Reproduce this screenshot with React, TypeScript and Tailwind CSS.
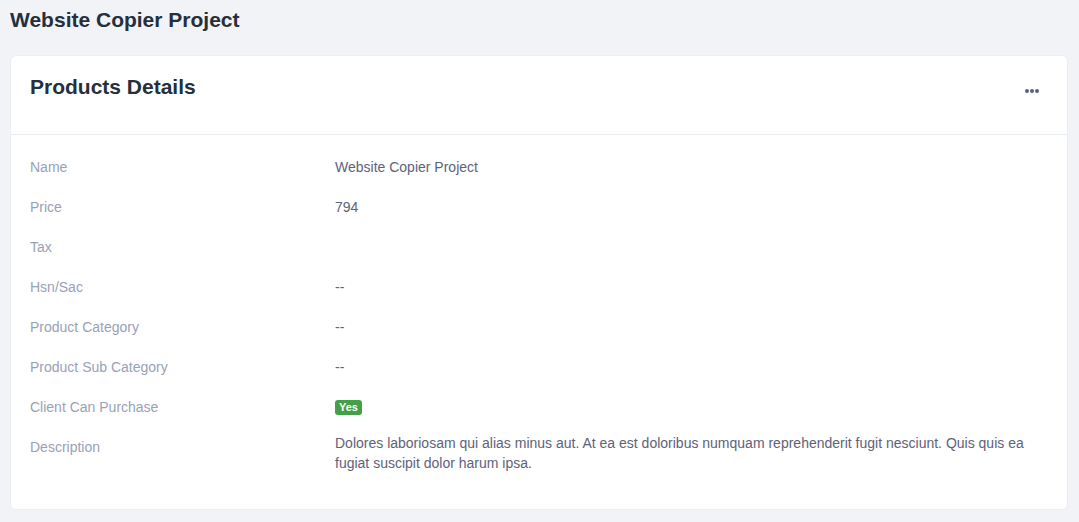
const rows: { label: string; value: string }[] = [
  { label: "Name", value: "Website Copier Project" },
  { label: "Price", value: "794" },
  { label: "Tax", value: "" },
  { label: "Hsn/Sac", value: "--" },
  { label: "Product Category", value: "--" },
  { label: "Product Sub Category", value: "--" },
];

const App = () => {
  return (
    <div className="min-h-[522px] bg-[#f2f3f7] px-[10px] pt-[6px] pb-[12px] font-['Liberation_Sans',Arial,sans-serif]">
      <h1 className="mb-[21px] text-[21px] leading-[28px] font-bold text-[#252f3d]">
        Website Copier Project
      </h1>

      <div className="w-[1058px] rounded-[6px] border border-[#eceef3] bg-white">
        <div className="flex h-[79px] items-start justify-between border-b border-[#e9edf2] px-[19px] pt-[17px]">
          <h2 className="text-[21px] leading-[28px] font-bold text-[#252f3d]">Products Details</h2>
          <button className="mt-[16px] mr-[9px] flex gap-[1px]">
            <span className="h-[4px] w-[4px] rounded-full bg-[#5e6278]" />
            <span className="h-[4px] w-[4px] rounded-full bg-[#5e6278]" />
            <span className="h-[4px] w-[4px] rounded-full bg-[#5e6278]" />
          </button>
        </div>

        <div className="px-[19px] pt-[12px] pb-[26px] text-[14px] leading-[20px]">
          {rows.map((r) => (
            <div key={r.label} className="flex py-[10px]">
              <div className="w-[305px] shrink-0 text-[#99a1b7]">{r.label}</div>
              <div className="text-[#5e6278]">{r.value}</div>
            </div>
          ))}
          <div className="flex py-[10px]">
            <div className="w-[305px] shrink-0 text-[#99a1b7]">Client Can Purchase</div>
            <div className="flex items-center">
              <span className="rounded-[3px] bg-[#43a047] px-[4px] text-[11px] leading-[15px] font-bold text-white">
                Yes
              </span>
            </div>
          </div>
          <div className="flex py-[10px]">
            <div className="w-[305px] shrink-0 text-[#99a1b7]">Description</div>
            <div className="-mt-[4px] pr-[20px] text-[#5e6278]">
              Dolores laboriosam qui alias minus aut. At ea est doloribus numquam reprehenderit fugit nesciunt. Quis quis ea fugiat suscipit dolor harum ipsa.
            </div>
          </div>
        </div>
      </div>
    </div>
  );
};

export default App;
